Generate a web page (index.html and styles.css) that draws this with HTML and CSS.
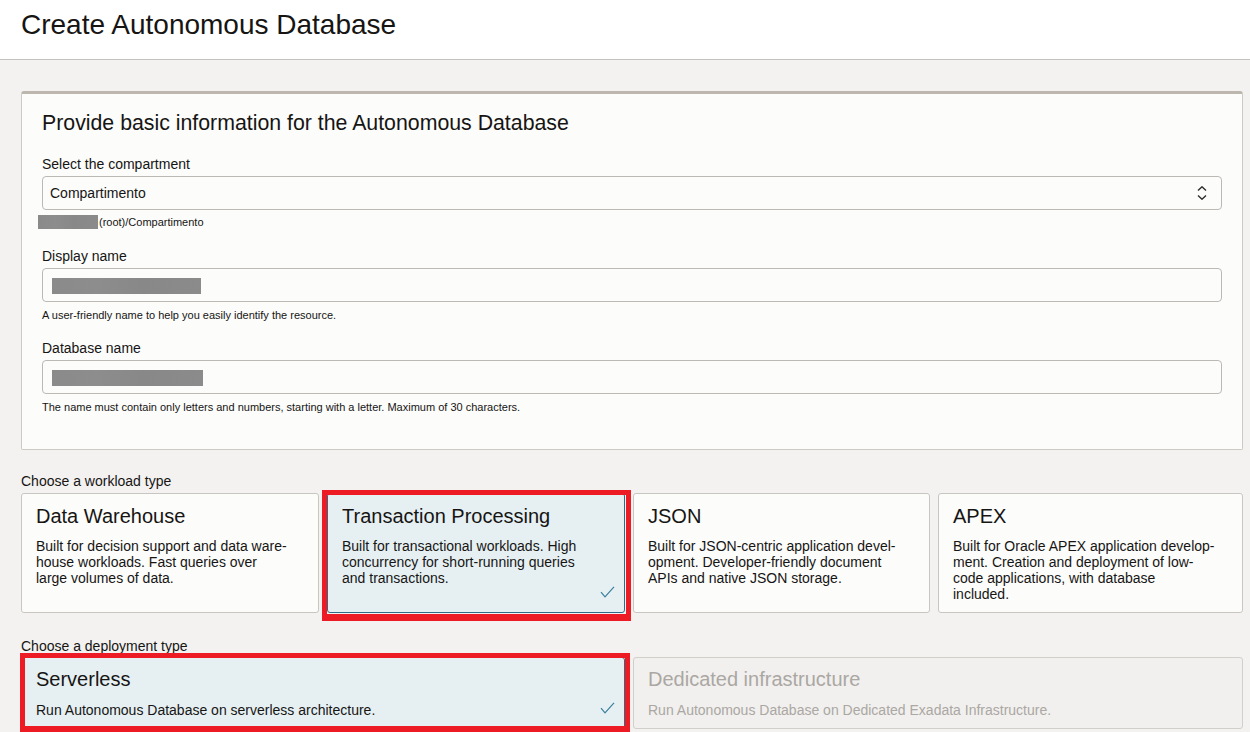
FILE: index.html
```html
<!DOCTYPE html>
<html lang="en">
<head>
<meta charset="utf-8">
<title>Create Autonomous Database</title>
<link rel="stylesheet" href="styles.css">
</head>
<body>
<header class="page-header">
  <h1 class="page-title">Create Autonomous Database</h1>
</header>
<main class="content">
  <section class="panel">
    <h2 class="panel-title">Provide basic information for the Autonomous Database</h2>
    <div class="field field-compartment">
      <label class="field-label">Select the compartment</label>
      <div class="select">
        <span>Compartimento</span>
        <svg class="chevrons" width="10" height="14" viewBox="0 0 10 14"><path d="M1 4.5 L5 0.8 L9 4.5" fill="none" stroke="#2b2b2b" stroke-width="1.4"/><path d="M1 9.5 L5 13.2 L9 9.5" fill="none" stroke="#2b2b2b" stroke-width="1.4"/></svg>
      </div>
      <div class="path"><span class="redact redact-path"></span>(root)/Compartimento</div>
    </div>
    <div class="field field-display">
      <label class="field-label">Display name</label>
      <div class="input"><span class="redact redact-value"></span></div>
      <div class="help">A user-friendly name to help you easily identify the resource.</div>
    </div>
    <div class="field">
      <label class="field-label">Database name</label>
      <div class="input"><span class="redact redact-value wide"></span></div>
      <div class="help">The name must contain only letters and numbers, starting with a letter. Maximum of 30 characters.</div>
    </div>
  </section>

  <div class="group-label group-workload">Choose a workload type</div>
  <div class="cards cards-four">
    <div class="card">
      <div class="card-title">Data Warehouse</div>
      <div class="card-desc">Built for decision support and data ware-<br>house workloads. Fast queries over<br>large volumes of data.</div>
    </div>
    <div class="card selected">
      <div class="card-title">Transaction Processing</div>
      <div class="card-desc">Built for transactional workloads. High<br>concurrency for short-running queries<br>and transactions.</div>
      <svg class="check" width="15" height="12" viewBox="0 0 15 12"><path d="M1 6.2 L5 10.8 L14 0.8" fill="none" stroke="#3a7f9c" stroke-width="1.2"/></svg>
      <span class="mark mark-workload"></span>
    </div>
    <div class="card">
      <div class="card-title">JSON</div>
      <div class="card-desc">Built for JSON-centric application devel-<br>opment. Developer-friendly document<br>APIs and native JSON storage.</div>
    </div>
    <div class="card">
      <div class="card-title">APEX</div>
      <div class="card-desc">Built for Oracle APEX application develop-<br>ment. Creation and deployment of low-<br>code applications, with database<br>included.</div>
    </div>
  </div>

  <div class="group-label group-deploy">Choose a deployment type</div>
  <div class="cards cards-two">
    <div class="card deploy selected">
      <div class="card-title">Serverless</div>
      <div class="card-desc">Run Autonomous Database on serverless architecture.</div>
      <svg class="check" width="15" height="12" viewBox="0 0 15 12"><path d="M1 6.2 L5 10.8 L14 0.8" fill="none" stroke="#3a7f9c" stroke-width="1.2"/></svg>
      <span class="mark mark-deploy"></span>
    </div>
    <div class="card deploy disabled">
      <div class="card-title">Dedicated infrastructure</div>
      <div class="card-desc">Run Autonomous Database on Dedicated Exadata Infrastructure.</div>
    </div>
  </div>
</main>
</body>
</html>
```

FILE: styles.css
```css
html, body {
  margin: 0;
  padding: 0;
}
body {
  background: #f3f2f1;
  color: #161513;
  font-family: "Liberation Sans", Arial, sans-serif;
  overflow: hidden;
  height: 732px;
}
.page-header {
  background: #ffffff;
  border-bottom: 1px solid #c4c2bf;
  box-sizing: border-box;
  height: 60px;
  padding: 9px 0 0 21px;
}
.page-title {
  margin: 0;
  font-weight: normal;
  font-size: 28px;
  line-height: 32px;
}
.content {
  padding: 31px 7px 0 21px;
}
.panel {
  background: #fcfcfb;
  border: 1px solid #cdc9c4;
  border-top: 3px solid #bdb6af;
  border-radius: 3px 3px 2px 2px;
  padding: 17px 20px 35px 20px;
}
.panel-title {
  margin: 0 0 20px;
  font-weight: normal;
  font-size: 21.3px;
  line-height: 25px;
}
.field-label {
  display: block;
  font-size: 14px;
  line-height: 16px;
  margin-bottom: 4px;
}
.field-compartment {
  margin-bottom: 19px;
}
.field-display {
  margin-bottom: 18px;
}
.select, .input {
  height: 34px;
  box-sizing: border-box;
  border: 1px solid #bcb9b5;
  border-radius: 4px;
  background: #fcfcfb;
  display: flex;
  align-items: center;
  font-size: 14px;
}
.select {
  justify-content: space-between;
  padding: 0 14px 0 7px;
}
.chevrons {
  display: block;
}
.input {
  padding: 0 0 0 9px;
}
.redact {
  display: inline-block;
  background: linear-gradient(90deg, #8a8a8a 0%, #8d8d8d 30%, #888 60%, #8b8b8b 100%);
}
.redact-path {
  width: 60px;
  height: 14px;
  margin-left: -4px;
  margin-right: 1px;
}
.redact-value {
  width: 149px;
  height: 16px;
  margin-top: 1px;
}
.redact-value.wide {
  width: 151px;
}
.path {
  display: flex;
  align-items: center;
  margin-top: 5px;
  font-size: 11px;
  line-height: 14px;
}
.help {
  margin-top: 6px;
  font-size: 11px;
  line-height: 14px;
}
.group-label {
  font-size: 14px;
  line-height: 16px;
}
.group-workload {
  margin: 23px 0 4px;
}
.group-deploy {
  margin: 25px 0 3px;
}
.cards {
  display: grid;
  gap: 8px;
}
.cards-four {
  grid-template-columns: 298px 298px 297px 1fr;
}
.cards-two {
  grid-template-columns: 604px 1fr;
}
.card {
  position: relative;
  background: #fcfcfb;
  border: 1px solid #c9c6c1;
  border-radius: 3px;
  padding: 10px 14px 10px;
}
.card.deploy {
  padding-top: 9px;
}
.card-title {
  font-size: 20px;
  line-height: 24px;
  margin-bottom: 10px;
}
.card.deploy .card-title {
  margin-bottom: 11px;
}
.card-desc {
  font-size: 14px;
  line-height: 16px;
}
.card.selected {
  background: #e6f0f3;
  border-color: #2f6b86;
}
.card.disabled {
  background: #f1f0ee;
  border-color: #d2cfcb;
  color: #aba7a3;
}
.check {
  position: absolute;
  right: 9px;
  bottom: 14px;
}
.mark {
  position: absolute;
  border-style: solid;
  border-color: #ed1c24;
  pointer-events: none;
}
.mark-workload {
  left: -6px;
  top: -4px;
  right: -7px;
  bottom: -9px;
  border-width: 5px 5px 7px 5px;
}
.mark-deploy {
  left: -2px;
  top: -5px;
  right: -6px;
  bottom: -4px;
  border-width: 5px 5px 6px 5px;
}
```
